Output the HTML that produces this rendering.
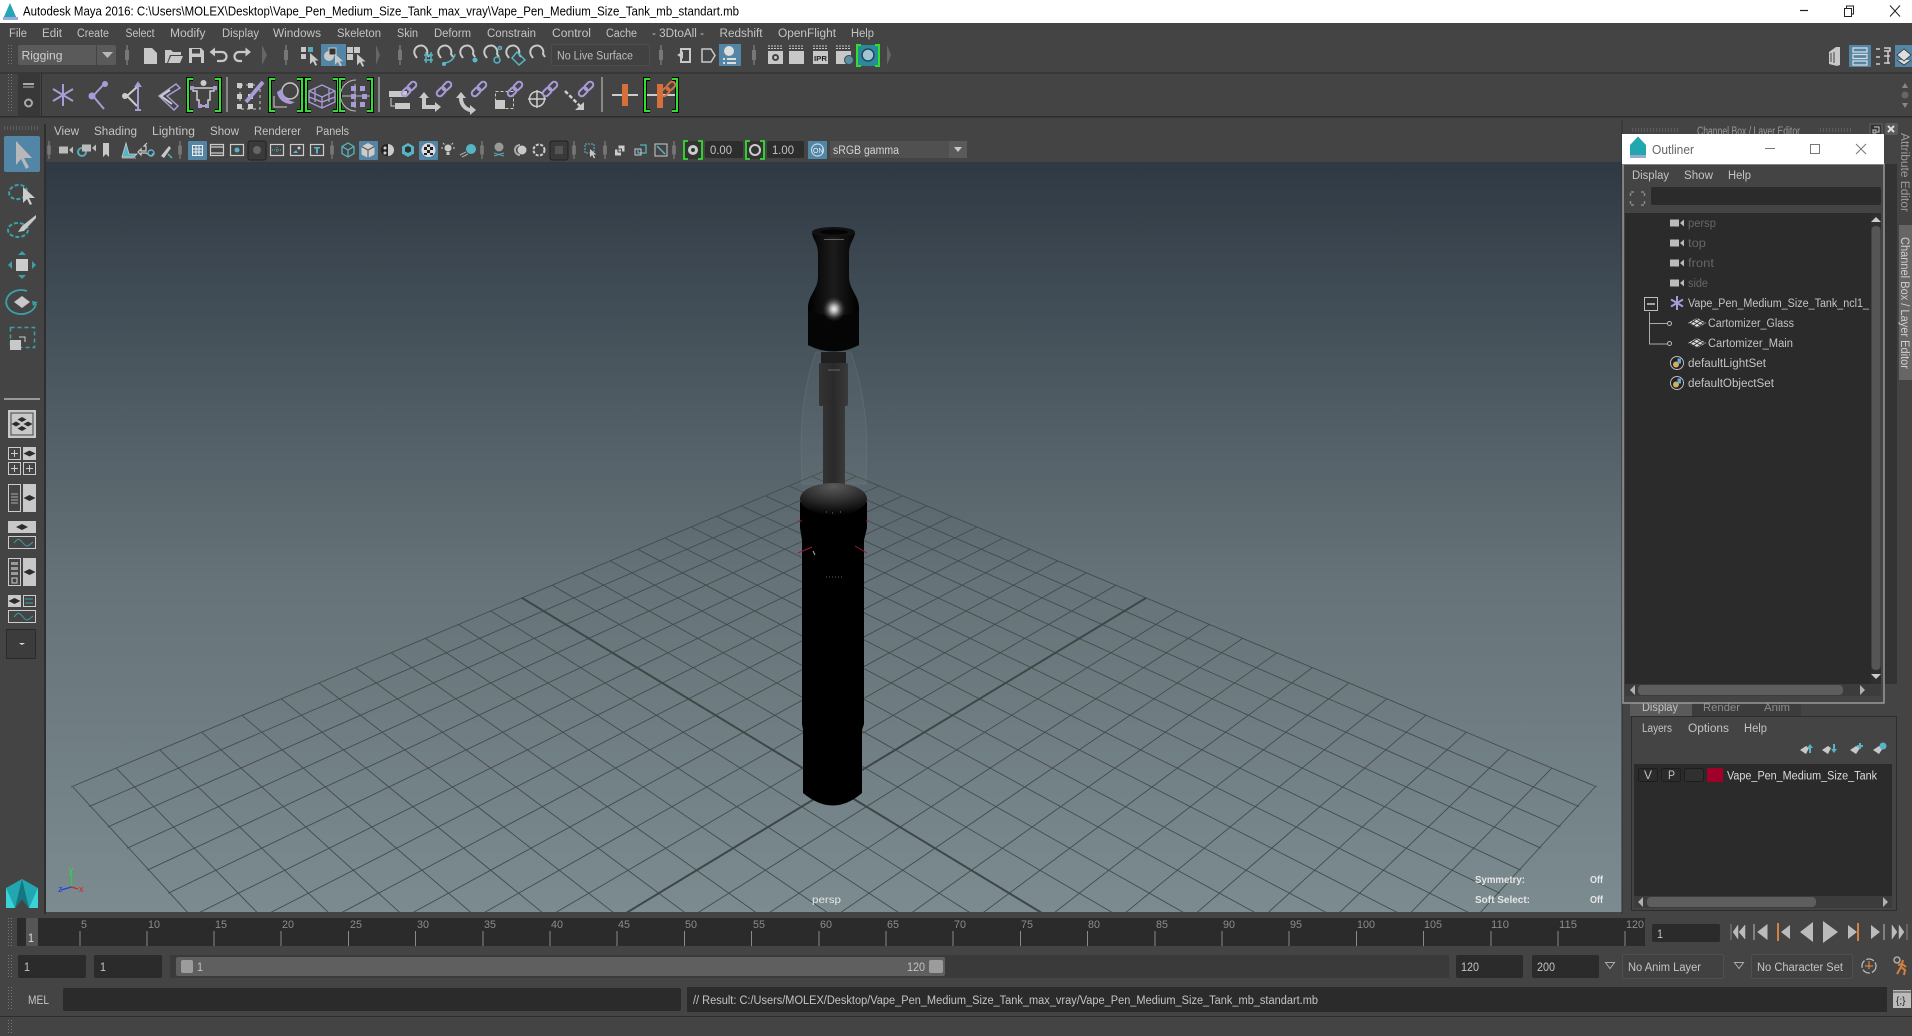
<!DOCTYPE html>
<html lang="en"><head><meta charset="utf-8"><title>Autodesk Maya 2016</title>
<style>
html,body{margin:0;padding:0;width:1912px;height:1036px;overflow:hidden;background:#444}
#wrap{position:relative;width:1912px;height:1036px;overflow:hidden}
svg{display:block}
text{font-family:"Liberation Sans",sans-serif;font-size:11.5px;fill:#c4c4c4}
.d{fill:#666}.k{fill:#000;font-size:12.5px}.w{fill:#e6e6e6;font-size:10.5px}.r{fill:#8c8c8c;font-size:11px}
.i{fill:#c8c8c8}.s{fill:none;stroke:#c8c8c8;stroke-width:2}
.t{fill:none;stroke:#55b5c4;stroke-width:1.5}
.p{fill:#a99bd8}.ps{fill:none;stroke:#a99bd8;stroke-width:2}
.dot{stroke:#777;stroke-width:1;stroke-dasharray:1 2;fill:none}
</style></head><body>
<div id="wrap">
<svg width="1912" height="1036" viewBox="0 0 1912 1036">
<defs>
<linearGradient id="vg" x1="0" y1="0" x2="0" y2="1"><stop offset="0" stop-color="#2f3943"/><stop offset=".3" stop-color="#4c5961"/><stop offset=".56" stop-color="#667378"/><stop offset="1" stop-color="#7b8b8f"/></linearGradient>
<linearGradient id="mp" x1="0" y1="0" x2="1" y2="0"><stop offset="0" stop-color="#000"/><stop offset=".5" stop-color="#1c1c1c"/><stop offset="1" stop-color="#000"/></linearGradient>
<linearGradient id="st" x1="0" y1="0" x2="1" y2="0"><stop offset="0" stop-color="#333"/><stop offset=".5" stop-color="#2a2a2a"/><stop offset="1" stop-color="#3a3a3a"/></linearGradient>
<radialGradient id="hl"><stop offset="0" stop-color="#f4f4f4"/><stop offset=".3" stop-color="#aaa"/><stop offset="1" stop-color="#222" stop-opacity="0"/></radialGradient>
<radialGradient id="dm" cx=".5" cy=".1" r=".85"><stop offset="0" stop-color="#5a5a5a"/><stop offset=".55" stop-color="#2e2e2e"/><stop offset="1" stop-color="#060606"/></radialGradient>
<clipPath id="vp"><rect x="46" y="162" width="1576" height="750"/></clipPath>
<path id="gA" d="M834 467L71 787M856.3 476.3L89 806.6M879.2 485.9L107.6 827M902.6 495.8L127 848.2M926.8 505.9L147.2 870.2M951.5 516.3L168.2 893.2M977 527L196.400 914M1003.2 538L267.700 914M1030.1 549.3L339 914M1057.9 560.9L410.300 914M1086.4 572.8L481.700 914M1115.8 585.2L553.200 914M1177.3 611L695.800 914M1209.5 624.5L767.200 914M1242.7 638.4L838.500 914M1276.9 652.8L909.900 914M1312.4 667.6L981.300 914M1349 683L1052.700 914M1386.8 698.8L1123.900 914M1425.9 715.3L1195.300 914M1466.4 732.2L1266.600 914M1508.4 749.8L1338 914M1551.9 768.1L1409.400 914M1595 787L1479 914" fill="none" stroke="#424c4e" stroke-width=".9"/>
<path id="gT" d="M1146.1 597.9L624.500 914" fill="none" stroke="#3e4648" stroke-width="2"/>
<path id="cur" d="M0 0V15L4 11 7 17 9.500 16 6.500 10H11.500Z" fill="#c8c8c8"/>
<path id="mag" d="M-5 6L-7 3A6.500 6.500 0 1 1 5 2L7 5" fill="none" stroke="#c8c8c8" stroke-width="2"/>
<g id="knob"><rect x="-1" y="-10" width="2" height="20" fill="#6a6a6a"/><rect x="-2" y="-5" width="4" height="10" fill="#777"/></g>
<g id="bl"><path d="M6 -16H1V16H6M28 -16H33V16H28" fill="none" stroke="#000" stroke-width="4"/><path d="M6 -16H1V16H6M28 -16H33V16H28" fill="none" stroke="#2fe02f" stroke-width="2"/></g>
<g id="chain"><rect x="-9" y="-3" width="10" height="6" rx="3" fill="none" stroke="#a99bd8" stroke-width="2"/><rect x="-1" y="-3" width="10" height="6" rx="3" fill="none" stroke="#a99bd8" stroke-width="2"/></g>
<g id="set"><circle r="6.500" fill="#222" stroke="#bbb" stroke-width="1"/><circle cx="-1" cy="1.500" r="3" fill="#d0b060"/><rect x="0.500" y="-4.500" width="3.500" height="5" fill="#6aa6d0"/></g>
<g id="cam"><rect x="-7" y="-3.500" width="9" height="7" fill="#bbb"/><path d="M3 0L7 -3.500V3.500Z" fill="#bbb"/></g>
<g id="mesh"><path d="M-9 0L0 -5 9 0 0 5Z" fill="#ddd"/><path d="M-5 -2L5 3M-1 -4L8 1M-8 0L1 5M5 -3L-4 3M1 -5L-7 1M8 -1L-1 5" fill="none" stroke="#333" stroke-width=".9"/></g>
<path id="dia" d="M-6 0L0 -3 6 0 0 3Z" fill="#2c2c2c"/>
<path id="dia2" d="M-4.500 0L0 -2.500 4.500 0 0 2.500Z" fill="#2c2c2c"/>
</defs>

<!-- window bg -->
<rect width="1912" height="1036" fill="#444"/>
<rect width="1912" height="23" fill="#fff"/>
<path d="M3 19L10 3 17 19Z" fill="#25a5b5"/><rect x="3" y="17" width="15" height="3" fill="#9ad"/>
<text class="k" x="23" y="15.500" textLength="716" lengthAdjust="spacingAndGlyphs">Autodesk Maya 2016: C:\Users\MOLEX\Desktop\Vape_Pen_Medium_Size_Tank_max_vray\Vape_Pen_Medium_Size_Tank_mb_standart.mb</text>
<path d="M1800 10.500h8" stroke="#222" stroke-width="1.200"/>
<path d="M1844.500 8.500h7v8h-7zM1846.500 8.500v-2.500h7v8h-2" fill="none" stroke="#222"/>
<path d="M1890 5.500l10 11M1900 5.500l-10 11" stroke="#222" fill="none"/>

<!-- menu bar -->
<g>
<text x="9" y="37" textLength="18" lengthAdjust="spacingAndGlyphs">File</text>
<text x="42" y="37" textLength="20" lengthAdjust="spacingAndGlyphs">Edit</text>
<text x="77" y="37" textLength="32" lengthAdjust="spacingAndGlyphs">Create</text>
<text x="125.500" y="37" textLength="29" lengthAdjust="spacingAndGlyphs">Select</text>
<text x="170" y="37" textLength="35.500" lengthAdjust="spacingAndGlyphs">Modify</text>
<text x="222" y="37" textLength="37" lengthAdjust="spacingAndGlyphs">Display</text>
<text x="273" y="37" textLength="48" lengthAdjust="spacingAndGlyphs">Windows</text>
<text x="337" y="37" textLength="44" lengthAdjust="spacingAndGlyphs">Skeleton</text>
<text x="397" y="37" textLength="21" lengthAdjust="spacingAndGlyphs">Skin</text>
<text x="434" y="37" textLength="37" lengthAdjust="spacingAndGlyphs">Deform</text>
<text x="487" y="37" textLength="49" lengthAdjust="spacingAndGlyphs">Constrain</text>
<text x="552" y="37" textLength="39" lengthAdjust="spacingAndGlyphs">Control</text>
<text x="606" y="37" textLength="31" lengthAdjust="spacingAndGlyphs">Cache</text>
<text x="652" y="37" textLength="52" lengthAdjust="spacingAndGlyphs">- 3DtoAll -</text>
<text x="719.500" y="37" textLength="43" lengthAdjust="spacingAndGlyphs">Redshift</text>
<text x="778" y="37" textLength="58" lengthAdjust="spacingAndGlyphs">OpenFlight</text>
<text x="851" y="37" textLength="23" lengthAdjust="spacingAndGlyphs">Help</text>
</g>

<!-- status toolbar -->
<path class="dot" d="M8.500 45V66M11.500 45V66"/>
<rect x="18" y="45" width="98" height="20" rx="2" fill="#5a5a5a"/><rect x="96" y="45" width="1" height="20" fill="#444"/>
<text x="21.500" y="59.500" style="font-size:12px;fill:#d0d0d0" textLength="41" lengthAdjust="spacingAndGlyphs">Rigging</text>
<path d="M102 52h11l-5.500 6z" fill="#b8b8b8"/>
<use href="#knob" x="127" y="55"/>
<path d="M144 48h8l5 5v11h-13z" class="i"/>
<path d="M165 50h6l2 2h8v3h-11l-3 8h-2zM171 56h12l-3 7h-12z" class="i"/>
<path d="M189 48h12l3 3v12h-15z" class="i"/><rect x="192" y="49" width="8" height="4.500" fill="#444"/><rect x="192" y="57" width="9" height="6" fill="#444"/>
<path d="M214 52h8a4.500 4.500 0 0 1 0 9h-5" fill="none" stroke="#c8c8c8" stroke-width="2.200"/><path d="M215 47.500v9l-5.500 -4.500z" class="i"/>
<path d="M246 52h-7a4.500 4.500 0 0 0 0 9h3" fill="none" stroke="#c8c8c8" stroke-width="2.200"/><path d="M245.500 47.500v9l5.500 -4.500z" class="i"/>
<path d="M262 45l5 10 -5 10z" fill="#666"/>
<use href="#knob" x="286" y="55"/>
<rect x="301" y="47" width="5" height="5" class="i"/><rect x="301" y="54" width="5" height="5" class="i"/><rect x="308" y="47" width="5" height="5" fill="#5ab"/>
<use href="#cur" transform="translate(310 53) scale(.75)"/>
<rect x="321" y="44" width="25" height="22" fill="#5285a6"/><circle cx="329" cy="56" r="5" class="i"/><rect x="329" y="48" width="7" height="7" fill="#333" stroke="#ccc"/><use href="#cur" transform="translate(335 54) scale(.72)"/>
<rect x="347" y="47" width="6" height="6" class="i"/><rect x="354" y="47" width="6" height="6" class="i"/><rect x="347" y="54" width="6" height="6" class="i"/><use href="#cur" transform="translate(357 54) scale(.75)"/>
<path d="M376 45l4 10 -4 10z" fill="#666"/>
<use href="#knob" x="400" y="55"/>
<use href="#mag" x="422" y="52"/><path d="M424 55h9M424 60h9M426 52v11M431 52v11" class="t"/>
<use href="#mag" x="446" y="52"/><path d="M443 63c4 0 11 -2 12 -9" class="t" stroke-width="2"/><circle cx="444" cy="64" r="2" fill="#5bc"/>
<use href="#mag" x="468" y="52"/><circle cx="475" cy="60" r="2.500" fill="#5bc"/>
<use href="#mag" x="492" y="52"/><circle cx="497" cy="60" r="3" class="t"/><circle cx="500" cy="48" r="1.500" class="t"/>
<use href="#mag" x="514" y="52"/><path d="M517 52l8 8 -6 5 -7 -7z" class="t"/>
<use href="#mag" x="538" y="52"/>
<rect x="551.500" y="44.500" width="98" height="21" rx="2" fill="#414141" stroke="#4e4e4e"/>
<text x="557" y="59.500" textLength="76" lengthAdjust="spacingAndGlyphs" style="fill:#bcbcbc">No Live Surface</text>
<use href="#knob" x="661" y="55"/>
<path d="M681 49h9v13h-9zM679 55l3 -2v4z" class="s" stroke-width="1.500"/>
<path d="M702 49h9l4 6.500 -4 6.500h-9z" fill="none" stroke="#c8c8c8" stroke-width="1.500"/>
<rect x="719" y="44" width="22" height="22" fill="#5285a6"/><circle cx="729" cy="51" r="5" fill="#ddd"/><path d="M723 58h2v2h-2zM727 58h9v2h-9zM723 62h2v2h-2zM727 62h9v2h-9z" fill="#ddd"/>
<use href="#knob" x="754" y="55"/>
<path d="M768 46h15M789 46h15M813 46h15M836 46h15M768 48.500h15M789 48.500h15M813 48.500h15M836 48.500h15" stroke="#c8c8c8" stroke-dasharray="2 1"/>
<rect x="768" y="51" width="15" height="13" class="i"/><circle cx="775.500" cy="57.500" r="3.500" fill="#444"/><circle cx="775.500" cy="57.500" r="1.500" fill="#ccc"/>
<rect x="789" y="51" width="15" height="13" class="i"/>
<rect x="813" y="51" width="15" height="13" class="i"/><text x="814" y="61" style="font-size:7.500px;fill:#222;font-weight:bold" textLength="13" lengthAdjust="spacingAndGlyphs">IPR</text>
<rect x="836" y="51" width="15" height="13" class="i"/><circle cx="849" cy="60" r="4.500" fill="#5a8fa8" stroke="#444"/>
<rect x="858" y="45" width="20" height="21" fill="#2a8a9a"/><circle cx="868" cy="55" r="6" fill="#9fc6ce" stroke="#246" stroke-width="1.500"/>
<path d="M861 45h-4v21h4M875 45h4v21h-4" fill="none" stroke="#2fe02f" stroke-width="2"/>
<path d="M887 45l4 10 -4 10z" fill="#666"/>

<!-- right workspace icons -->
<path d="M1829 52l7 -5 4 0 v18l-3 1 -8 -2z" class="i"/><path d="M1831 53v9M1834 52v11" stroke="#444" stroke-width="1"/>
<rect x="1849" y="45" width="22" height="22" fill="#5285a6"/><path d="M1853 48h14v4h-14zM1853 54.500h14v4h-14zM1853 61h14v4h-14z" fill="none" stroke="#ddd" stroke-width="1.200"/>
<path d="M1876 49h4M1884 48h6v3h-6M1876 57h4M1884 56h6M1876 64h4M1884 63h6M1888 51v13" fill="none" stroke="#ccc" stroke-width="1.500"/>
<rect x="1895" y="45" width="17" height="22" fill="#5285a6"/><path d="M1897 55l7 -6 7 6 -7 6zM1897 60l7 5 7 -5" fill="#ddd" stroke="#333" stroke-width=".8"/>

<!-- shelf -->
<path d="M0 73H1912M0 116.500H1912" stroke="#2d2d2d"/>
<path class="dot" d="M8.500 74V113M11.500 74V113"/>
<rect x="18" y="72" width="22" height="45" fill="#383838"/>
<rect x="23" y="83" width="11" height="2" fill="#aaa"/><rect x="23" y="86" width="11" height="2" fill="#777"/>
<circle cx="28.500" cy="103" r="3.500" fill="none" stroke="#aaa" stroke-width="2"/>
<rect x="41" y="73" width="1" height="43" fill="#2d2d2d"/>
<path d="M63 84V106M53 89L73 101M53 101L73 89" class="ps" stroke-width="2.500"/>
<path d="M105 83L93 96 104 109" class="ps" stroke-width="2"/><circle cx="105" cy="84" r="3" class="p"/><circle cx="92" cy="96" r="3.500" class="p"/>
<path d="M127 96L137 87M127 96L137 106" fill="none" stroke="#ccc" stroke-width="2"/><path d="M138 83V110" class="ps" stroke-width="2.500"/><path d="M135 110h6M138 83l-2 3h4z" class="ps" stroke-width="1"/><circle cx="125" cy="96" r="3" fill="#ccc"/>
<path d="M176 84L159 96 174 110 178 106 167 96 180 88Z" fill="none" stroke="#a99bd8" stroke-width="1.500"/><path d="M170 90L161 96 172 104" fill="none" stroke="#ccc" stroke-width="2"/>
<use href="#bl" x="187" y="95"/>
<circle cx="203.500" cy="83" r="3" fill="#ccc"/><path d="M193 88h21v3h-4v9h-2v6h-9v-6h-2v-9h-4z" fill="none" stroke="#ccc" stroke-width="1.500"/><rect x="190" y="86" width="4" height="4" class="p"/><rect x="213" y="86" width="4" height="4" class="p"/><rect x="198" y="104" width="4" height="4" class="p"/><rect x="205" y="104" width="4" height="4" class="p"/>
<rect x="226" y="77" width="2" height="35" fill="#888"/>
<path d="M240 85h20v24h-20z" fill="none" stroke="#ccc" stroke-dasharray="3 3"/><path d="M237 83h5v5h-5zM248 83h5v5h-5zM237 94h5v5h-5zM248 94h5v5h-5zM237 104h5v5h-5zM248 104h5v5h-5z" fill="#ccc"/><path d="M246 102L263 82" stroke="#a99bd8" stroke-width="4"/>
<use href="#bl" x="269" y="95"/>
<circle cx="290" cy="91" r="8" fill="#444" stroke="#c8c8c8" stroke-width="1.500"/><path d="M277 92a14 14 0 0 0 14 12l4 -2a14 14 0 0 1 -13 -13z" class="p"/><path d="M274 96v11h13" fill="none" stroke="#ccc"/>
<use href="#bl" x="305" y="95"/>
<path d="M309 91l13 -6 13 6v11l-13 6 -13 -6zM309 91l13 6 13 -6M322 97v11M315 88v14M329 88v14M309 97l13 5 13 -5" fill="none" stroke="#a99bd8" stroke-width="1.300"/>
<use href="#bl" x="339" y="95"/>
<path d="M356 80a15 15 0 0 0 0 31M342 96h28M355 84v24" fill="none" stroke="#bbb"/>
<path d="M351 86h5v5h-5zM360 86h5v5h-5zM351 94h5v5h-5zM362 94h5v5h-5zM351 102h5v5h-5zM360 102h5v5h-5z" class="p"/>
<rect x="378" y="77" width="2" height="35" fill="#888"/>
<rect x="389" y="91" width="18" height="6" class="i"/><rect x="395" y="103" width="15" height="6" class="i"/><path d="M391 98v8h4" fill="none" stroke="#ccc"/><use href="#chain" transform="translate(409 89) rotate(-45)"/>
<path d="M424 92l-5 6h3v11h13v3l6 -5 -6 -5v3h-9v-7h3z" class="i"/><use href="#chain" transform="translate(444 89) rotate(-45)"/>
<path d="M461 92l-5 6h3a14 14 0 0 0 11 14v3l6 -5 -6 -5v3a10 10 0 0 1 -7 -10h3z" class="i"/><use href="#chain" transform="translate(479 89) rotate(-45)"/>
<rect x="495.500" y="91.500" width="18" height="17" fill="none" stroke="#ccc" stroke-dasharray="3 2"/><rect x="495" y="100" width="10" height="9" class="i"/><use href="#chain" transform="translate(515 89) rotate(-45)"/>
<circle cx="537" cy="99" r="7.500" fill="none" stroke="#ccc" stroke-width="1.500"/><path d="M528 99h18M537 90v18" stroke="#ccc" stroke-width="1.500"/><use href="#chain" transform="translate(550 89) rotate(-45)"/>
<path d="M565 91l15 15" stroke="#ccc" stroke-width="2.500" stroke-dasharray="4 2"/><path d="M584 102v8h-9z" class="i"/><use href="#chain" transform="translate(586 89) rotate(-45)"/>
<rect x="601" y="77" width="2" height="35" fill="#888"/>
<path d="M612 95h26" stroke="#ccc" stroke-width="2"/><rect x="622" y="84" width="6" height="22" fill="#d5703d"/>
<use href="#bl" x="644" y="95"/>
<path d="M647 95h28" stroke="#ccc" stroke-width="2"/><rect x="657" y="84" width="6" height="24" fill="#d5703d"/>
<g transform="translate(668 89) rotate(-45)"><rect x="-9" y="-3" width="10" height="6" rx="3" fill="none" stroke="#d5703d" stroke-width="2"/><rect x="-1" y="-3" width="10" height="6" rx="3" fill="none" stroke="#d5703d" stroke-width="2"/></g>
<path d="M1902 88l3 -5 3 5z" fill="#888"/><circle cx="1905" cy="95" r="3.500" fill="#666"/><path d="M1902 103l3 5 3 -5z" fill="#888"/>
<path d="M0 117h1912" stroke="#2d2d2d"/>

<!-- viewport -->
<rect x="46" y="162" width="1576" height="750" fill="url(#vg)"/>
<g clip-path="url(#vp)">
<use href="#gA"/><use href="#gA" transform="translate(1668 0) scale(-1 1)"/>
<use href="#gT"/><use href="#gT" transform="translate(1668 0) scale(-1 1)"/>
<!-- glass -->
<path d="M816 352C806 380 801 410 801 450L802 484H866L867 450C867 410 860 380 851 352Z" fill="#fff" fill-opacity=".035" stroke="#a0aeb4" stroke-opacity=".14"/>
<!-- stem -->
<rect x="821" y="352" width="25" height="12" fill="#1d1d1d" opacity=".95"/>
<rect x="819" y="363" width="29" height="43" rx="2" fill="url(#st)"/>
<path d="M828 370h12" stroke="#777" stroke-width=".8"/>
<rect x="823" y="406" width="22" height="82" fill="url(#st)"/>
<!-- mouthpiece -->
<path d="M812 233C813 240 818 243 818 254L818 276C818 290 808 295 808 308L808 345Q834 358 859 345L859 308C859 295 849 290 849 276L849 254C849 243 854 240 855 233Z" fill="url(#mp)"/>
<path d="M808 310Q834 322 859 310V345Q834 358 808 345Z" fill="#050505"/>
<ellipse cx="833.500" cy="232" rx="21.500" ry="5" fill="#111"/>
<ellipse cx="834" cy="232" rx="14" ry="2.500" fill="#040404"/><path d="M824 239.500h20" stroke="#bbb" stroke-opacity=".6" stroke-width=".8"/>
<ellipse cx="834" cy="309" rx="12" ry="13" fill="url(#hl)"/>
<!-- body -->
<path d="M800 502V528L802 540V724L803 730V793Q833 818 862 793V730L864 724V540L867 528V502Z" fill="#000"/>
<ellipse cx="833.500" cy="499" rx="33.500" ry="16" fill="url(#dm)"/>
<path d="M798 521h4M866 521h3M798 553L812 547M855 546L867 553" stroke="#a01840" stroke-width="1"/>
<path d="M826 577h16" stroke="#666" stroke-width="1" stroke-dasharray="1 2"/>
<path d="M826 512h1M832 513h1M840 512h1" stroke="#777" stroke-width="1"/>
<path d="M813 551l2 4" stroke="#aaa" stroke-width="1"/>
</g>
<!-- axis -->
<path d="M71.500 887V873" stroke="#2ecc40" stroke-width="1.400"/><path d="M71.500 887L61 890" stroke="#2040e0" stroke-width="1.400"/><path d="M71.500 887L78 889" stroke="#e02020" stroke-width="1.400"/>
<text x="68.500" y="873" style="font-size:9px;fill:#33dd44">y</text><text x="58" y="892" style="font-size:9px;fill:#2040e0">z</text><text x="79" y="892" style="font-size:9px;fill:#e02020">x</text>
<text class="w" x="812" y="903" textLength="29" lengthAdjust="spacingAndGlyphs">persp</text>
<text class="w" x="1475" y="883" textLength="50" lengthAdjust="spacingAndGlyphs" font-weight="bold">Symmetry:</text>
<text class="w" x="1590" y="883" textLength="13" lengthAdjust="spacingAndGlyphs" font-weight="bold">Off</text>
<text class="w" x="1475" y="903" textLength="55" lengthAdjust="spacingAndGlyphs" font-weight="bold">Soft Select:</text>
<text class="w" x="1590" y="903" textLength="13" lengthAdjust="spacingAndGlyphs" font-weight="bold">Off</text>

<!-- panel menu & bar -->
<path class="dot" d="M4 127H38M4 129H38"/>
<text x="54" y="135" textLength="25" lengthAdjust="spacingAndGlyphs">View</text>
<text x="94" y="135" textLength="43" lengthAdjust="spacingAndGlyphs">Shading</text>
<text x="152" y="135" textLength="43" lengthAdjust="spacingAndGlyphs">Lighting</text>
<text x="210" y="135" textLength="29" lengthAdjust="spacingAndGlyphs">Show</text>
<text x="254" y="135" textLength="47" lengthAdjust="spacingAndGlyphs">Renderer</text>
<text x="316" y="135" textLength="33" lengthAdjust="spacingAndGlyphs">Panels</text>
<use href="#knob" transform="translate(49 150) scale(.9)"/>
<use href="#cam" x="66" y="150"/><circle cx="82" cy="152" r="4" fill="none" stroke="#5ab" stroke-width="2"/><use href="#cam" x="89" y="148"/>
<path d="M103 143h6v14l-3 -3 -3 3z" class="i"/>
<path d="M126 143l-4 14h12l3 -3h-8zM122 158h14" fill="#55b5c4" stroke="#ccc" stroke-width=".8"/>
<path d="M147 143l-3 3h2v5h-5v-2l-3 3 3 3v-2h5l5 3 3 -3" fill="none" stroke="#ccc" stroke-width="1.200"/><circle cx="151" cy="153" r="3" class="t"/>
<path d="M161 156l8 -10 2 2 -7 10z" class="i"/><path d="M168 154l4 4" class="t"/>
<use href="#knob" transform="translate(180 150) scale(.9)"/>
<rect x="188" y="141" width="19" height="19" rx="1" fill="#5285a6"/><path d="M192.500 145.500h10v10h-10zM192.500 149h10M192.500 152h10M196 145.500v10M199 145.500v10" fill="none" stroke="#eee"/>
<path d="M210.500 144.500h13v11h-13zM210.500 147h13M210.500 153h13" fill="none" stroke="#ccc" stroke-width="1.200"/>
<rect x="230.500" y="144.500" width="13" height="11" fill="none" stroke="#ccc" stroke-width="1.200"/><circle cx="237" cy="150" r="2.500" fill="#55b5c4"/>
<rect x="248" y="141" width="18" height="19" rx="2" fill="#3a3a3a" stroke="#222"/><circle cx="257" cy="150" r="4" fill="#666"/>
<rect x="270.500" y="144.500" width="13" height="11" fill="none" stroke="#ccc" stroke-width="1.200"/><path d="M272 150h10M277 147v6" stroke="#55b5c4" stroke-dasharray="1 1"/>
<rect x="290.500" y="144.500" width="13" height="11" fill="none" stroke="#ccc" stroke-width="1.200"/><path d="M293 153l3 -3 2 3z" fill="#55b5c4"/><circle cx="299" cy="148" r="1.500" fill="#ccc"/>
<rect x="310.500" y="144.500" width="13" height="11" fill="none" stroke="#ccc" stroke-width="1.200"/><path d="M314 147h6v1.500h-2v5h-2v-5h-2z" fill="#55b5c4"/>
<use href="#knob" transform="translate(332 150) scale(.9)"/>
<path d="M348 143l6 3.500v7l-6 3.500 -6 -3.500v-7zM342 146.500l6 3.500 6 -3.500M348 150v7" fill="none" stroke="#55b5c4" stroke-width="1.300"/>
<rect x="359" y="141" width="19" height="19" rx="1" fill="#5285a6"/><path d="M368 143l6.500 3.500v8l-6.500 3.500 -6.500 -3.500v-8z" fill="#ccc"/><path d="M361.500 146.500l6.500 3.500 6.500 -3.500M368 150v8" fill="none" stroke="#555"/>
<circle cx="388" cy="150" r="6" fill="#ccc"/><path d="M388 144v12h-1a6 6 0 0 1 0 -12z" fill="#222"/><circle cx="385" cy="148" r="1.500" fill="#ccc"/><circle cx="385" cy="153" r="1.500" fill="#ccc"/>
<path d="M408 143l6 3.500v7l-6 3.500 -6 -3.500v-7z" fill="#55b5c4"/><path d="M408 146l3 1.500v4l-3 1.500 -3 -1.500v-4z" fill="#333"/>
<rect x="419" y="141" width="19" height="19" rx="1" fill="#5285a6"/><circle cx="428.500" cy="150" r="7" fill="#ddd"/><path d="M424 147h3v3h-3zM430 147h3v3h-3zM427 150h3v3h-3zM424 153h3v2h-3zM430 153h3v2h-3zM427 144.500h3v2.500h-3z" fill="#222"/>
<circle cx="448" cy="148" r="3.500" class="i"/><rect x="446.500" y="152" width="3" height="3" class="i"/><path d="M441 148h2M453 148h2M443 143l1.500 1.500M453 143l-1.500 1.500" stroke="#ccc"/>
<circle cx="471" cy="149" r="5" fill="#55b5c4"/><path d="M460 155l6 -3M462 157l6 -3" stroke="#aaa"/>
<use href="#knob" transform="translate(482 150) scale(.9)"/>
<circle cx="499" cy="147" r="4.500" fill="#999"/><path d="M494 153l10 3M504 153l-10 3" stroke="#5ab"/>
<path d="M520 145a5 5 0 0 0 0 10" fill="none" stroke="#aaa" stroke-width="2"/><circle cx="522" cy="150" r="4.500" class="i"/>
<circle cx="539" cy="150" r="5.500" fill="none" stroke="#ccc" stroke-width="2" stroke-dasharray="3 1.500"/>
<rect x="550" y="141" width="18" height="19" rx="2" fill="#3a3a3a" stroke="#222"/><rect x="555" y="146" width="8" height="8" fill="#555"/>
<use href="#knob" transform="translate(574 150) scale(.9)"/>
<rect x="585" y="144" width="9" height="9" fill="none" stroke="#55b5c4" stroke-dasharray="2 1"/><use href="#cur" transform="translate(590 149) scale(.55)"/>
<use href="#knob" transform="translate(605 150) scale(.9)"/>
<path d="M618 145h7v7h-7zM614.500 149h7v7h-7z" fill="#ccc" stroke="#444" stroke-width="1"/>
<path d="M640 145h6v8h-8v-3" fill="none" stroke="#55b5c4" stroke-width="1.300"/><rect x="635" y="149" width="6" height="6" fill="none" stroke="#ccc"/>
<rect x="655" y="144" width="12" height="12" fill="none" stroke="#ccc"/><path d="M657 146l8 8" stroke="#55b5c4" stroke-width="1.500"/>
<use href="#knob" transform="translate(674 150) scale(.9)"/>
<rect x="685" y="141" width="16" height="18" fill="#333"/><circle cx="693" cy="150" r="5" fill="#ccc"/><circle cx="693" cy="150" r="2" fill="#333"/>
<path d="M688 141h-4v18h4M698 141h4v18h-4" fill="none" stroke="#2fe02f" stroke-width="1.800"/>
<rect x="705" y="141" width="38" height="17" rx="2" fill="#2d2d2d"/><text x="710" y="154" textLength="22" lengthAdjust="spacingAndGlyphs">0.00</text>
<rect x="747" y="141" width="16" height="18" fill="#333"/><circle cx="755" cy="150" r="5" fill="none" stroke="#ccc" stroke-width="2"/>
<path d="M750 141h-4v18h4M760 141h4v18h-4" fill="none" stroke="#2fe02f" stroke-width="1.800"/>
<rect x="767" y="141" width="37" height="17" rx="2" fill="#2d2d2d"/><text x="772" y="154" textLength="22" lengthAdjust="spacingAndGlyphs">1.00</text>
<rect x="808" y="141" width="19" height="18" fill="#5285a6"/><circle cx="817.500" cy="150" r="6" fill="none" stroke="#bde" stroke-width="1.200"/><text x="813" y="153" style="font-size:7px;fill:#eee">ON</text>
<rect x="830" y="141" width="137" height="17" fill="#5a5a5a"/><rect x="830" y="141" width="119" height="17" fill="#505050"/>
<text x="833" y="154" textLength="66" lengthAdjust="spacingAndGlyphs" style="fill:#d4d4d4">sRGB gamma</text>
<path d="M954 147h8l-4 5z" fill="#c8c8c8"/>

<!-- left toolbox -->
<rect x="44" y="124" width="2" height="790" fill="#2f2f2f"/>
<rect x="4" y="136" width="36" height="36" rx="2" fill="#5285a6"/>
<path d="M16 141V165L21 159 26 169 29 167 24 158H32Z" fill="#b8b8b8"/>
<ellipse cx="18" cy="192" rx="9" ry="7" fill="none" stroke="#3ba0a8" stroke-width="2" stroke-dasharray="4 2" transform="rotate(-15 18 192)"/><path d="M23 187V203L27 199 30 205 32 204 29 198H35Z" fill="#ccc"/>
<ellipse cx="18" cy="230" rx="10" ry="7" fill="none" stroke="#3ba0a8" stroke-width="2" stroke-dasharray="4 2"/><path d="M36 215L22 226 18 232 24 231 36 218Z" class="i"/>
<rect x="16" y="259" width="12" height="12" fill="#ccc"/><path d="M22 251l4 4h-8zM22 279l4 -4h-8zM8 265l4 -4v8zM36 265l-4 -4v8z" fill="#3ba0a8"/>
<path d="M27 291a15 12 0 1 0 9 13" fill="none" stroke="#3ba0a8" stroke-width="1.800"/><path d="M14 302l8 -6 8 6 -8 6z" class="i"/><path d="M38 302l-5 4 -1 -5z" fill="#3ba0a8"/>
<rect x="10.500" y="327.500" width="24" height="20" fill="none" stroke="#3ba0a8" stroke-width="1.500" stroke-dasharray="4 3"/><rect x="10" y="340" width="11" height="10" class="i"/><path d="M19 337h6v5" stroke="#ccc" fill="none"/>
<rect x="4" y="398" width="36" height="2" fill="#999"/>
<rect x="8" y="410" width="28" height="28" fill="#c8c8c8"/><rect x="11" y="413" width="22" height="22" fill="none" stroke="#444"/><use href="#dia2" x="22" y="419.500"/><use href="#dia2" x="16" y="424"/><use href="#dia2" x="28" y="424"/><use href="#dia2" x="22" y="428.500"/>
<rect x="8.500" y="447.500" width="12" height="12" fill="none" stroke="#ccc"/><rect x="23" y="447" width="13" height="13" class="i"/><rect x="8.500" y="462.500" width="12" height="12" fill="none" stroke="#ccc"/><rect x="23.500" y="462.500" width="12" height="12" fill="none" stroke="#ccc"/>
<path d="M14.500 450v7M11 453.500h7M14.500 465v7M11 468.500h7M29.500 465v7M26 468.500h7" stroke="#ccc"/><use href="#dia" x="29.500" y="453.500"/>
<rect x="8.500" y="484.500" width="12" height="27" fill="none" stroke="#ccc"/><rect x="23" y="484" width="13" height="28" class="i"/><path d="M11 494h7M11 497h7M11 500h7M11 503h7" stroke="#aaa"/><use href="#dia" x="29.500" y="498"/>
<rect x="8" y="521" width="28" height="12" class="i"/><use href="#dia" x="22" y="527"/><rect x="8.500" y="536.500" width="27" height="12" fill="none" stroke="#ccc"/><path d="M14 543c4 -5 5 -5 9 0s5 3 10 -1" fill="none" stroke="#3ba0a8"/>
<rect x="8.500" y="558.500" width="12" height="27" fill="none" stroke="#ccc"/><rect x="23" y="558" width="13" height="28" class="i"/><path d="M11 562h7v3h-7zM11 567h7v3h-7zM11 572h7v3h-7z" fill="#999"/><rect x="12" y="578" width="5" height="5" fill="none" stroke="#ccc"/><use href="#dia" x="29.500" y="572"/>
<rect x="8" y="595" width="13" height="12" class="i"/><use href="#dia" x="14.500" y="601"/><rect x="23.500" y="595.500" width="12" height="11" fill="none" stroke="#ccc"/><path d="M25 599h8M25 603h8" stroke="#3ba0a8"/>
<rect x="8.500" y="610.500" width="27" height="12" fill="none" stroke="#ccc"/><path d="M14 617c4 -5 5 -5 9 0s5 3 10 -1" fill="none" stroke="#3ba0a8"/>
<rect x="6.500" y="629.500" width="29" height="29" fill="#3c3c3c" stroke="#2a2a2a"/><path d="M19 643h6l-3 2z" fill="#ddd"/>
<!-- Maya logo -->
<path d="M6 888L22 879 38 888V908H29L22 899 15 908H6Z" fill="#22a7b0"/><path d="M22 879L15 908 22 899 29 908Z" fill="#147680"/><path d="M6 888L15 908H6Z" fill="#3bd3d8"/><path d="M38 888L29 908H38Z" fill="#3bd3d8"/>

<!-- right side -->
<rect x="1622" y="120" width="290" height="800" fill="#444"/>
<path d="M1622 120V914" stroke="#2f2f2f"/>
<path class="dot" d="M1632 129H1680M1632 131H1680M1820 129H1852M1820 131H1852"/>
<text x="1697" y="135" textLength="103" lengthAdjust="spacingAndGlyphs" style="fill:#9a9a9a">Channel Box / Layer Editor</text>
<rect x="1870" y="124" width="12" height="11" fill="#333" stroke="#666"/><path d="M1874 127h5v5h-2M1873 130h3v3h-3z" stroke="#ccc" fill="none"/>
<rect x="1885" y="123" width="13" height="12" rx="2" fill="#5a5a5a"/><path d="M1888 126l6 6M1894 126l-6 6" stroke="#ddd" stroke-width="2"/>
<text transform="translate(1901 133) rotate(90)" textLength="79" lengthAdjust="spacingAndGlyphs" style="fill:#9a9a9a">Attribute Editor</text>
<rect x="1899" y="225" width="13" height="155" fill="#666"/>
<text transform="translate(1901 237) rotate(90)" textLength="132" lengthAdjust="spacingAndGlyphs" style="fill:#d0d0d0">Channel Box / Layer Editor</text>
<rect x="1884" y="164" width="13" height="520" fill="#333"/>
<!-- layer editor -->
<rect x="1630" y="696" width="62" height="20" fill="#5a5a5a"/><rect x="1692" y="696" width="60" height="20" fill="#3c3c3c"/><rect x="1752" y="696" width="49" height="20" fill="#3c3c3c"/>
<text x="1642" y="711" textLength="36" lengthAdjust="spacingAndGlyphs">Display</text><text x="1703" y="711" textLength="37" lengthAdjust="spacingAndGlyphs" class="r">Render</text><text x="1764" y="711" textLength="26" lengthAdjust="spacingAndGlyphs" class="r">Anim</text>
<rect x="1631.500" y="716.500" width="265" height="194" fill="#444" stroke="#2d2d2d"/>
<text x="1642" y="732" textLength="30" lengthAdjust="spacingAndGlyphs">Layers</text>
<text x="1688" y="732" textLength="41" lengthAdjust="spacingAndGlyphs">Options</text>
<text x="1744" y="732" textLength="23" lengthAdjust="spacingAndGlyphs">Help</text>
<path d="M1800 750l6 -4 3 2 -3 6z" class="i"/><path d="M1810 744l3 4h-2v5h-2v-5h-2z" fill="#55b5c4"/>
<path d="M1822 750l6 -4 3 2 -3 6z" class="i"/><path d="M1834 753l-3 -4h2v-5h2v5h2z" fill="#55b5c4"/>
<path d="M1850 750l6 -4 4 2 -4 6z" class="i"/><path d="M1860 743v6M1857 746h6" stroke="#55b5c4" stroke-width="2"/>
<path d="M1873 750l6 -4 4 2 -4 6z" class="i"/><circle cx="1883" cy="746" r="3.500" fill="#55b5c4"/>
<rect x="1634" y="764" width="258" height="132" fill="#2b2b2b"/>
<rect x="1638.500" y="768.500" width="19" height="13" rx="2" fill="#2b2b2b" stroke="#1d1d1d"/><text x="1644" y="779" textLength="8" lengthAdjust="spacingAndGlyphs">V</text>
<rect x="1661.500" y="768.500" width="19" height="13" rx="2" fill="#2b2b2b" stroke="#1d1d1d"/><text x="1668" y="779" textLength="7" lengthAdjust="spacingAndGlyphs">P</text>
<rect x="1684.500" y="768.500" width="19" height="13" rx="2" fill="#303030" stroke="#1d1d1d"/>
<rect x="1707" y="768" width="16" height="14" fill="#a0002a"/>
<text x="1727" y="779.500" textLength="150" lengthAdjust="spacingAndGlyphs" style="fill:#dcdcdc">Vape_Pen_Medium_Size_Tank</text>
<rect x="1634" y="896" width="258" height="12" fill="#3c3c3c"/>
<path d="M1643 897v10l-5 -5zM1883 897v10l5 -5z" fill="#b0b0b0"/>
<rect x="1647" y="897" width="169" height="10" rx="4" fill="#5e5e5e"/>

<!-- outliner window -->
<rect x="1623" y="164" width="261" height="539" fill="#444" stroke="#9a9a9a" stroke-width="1.500"/>
<rect x="1622" y="134" width="262" height="30" fill="#fff"/>
<path d="M1630 143L1638 134.500 1646 143 1646 155H1630Z" fill="#22a7b0" transform="translate(0 2)"/><rect x="1630" y="155" width="16" height="3" fill="#9ac"/>
<text x="1652" y="154" style="font-size:13px;fill:#666" textLength="42" lengthAdjust="spacingAndGlyphs">Outliner</text>
<path d="M1765 148.500h10" stroke="#777"/><rect x="1810.500" y="144.500" width="9" height="9" fill="none" stroke="#777"/><path d="M1856 144l10 10M1866 144l-10 10" stroke="#777"/>
<text x="1632" y="179" textLength="37" lengthAdjust="spacingAndGlyphs">Display</text>
<text x="1684" y="179" textLength="29" lengthAdjust="spacingAndGlyphs">Show</text>
<text x="1728" y="179" textLength="23" lengthAdjust="spacingAndGlyphs">Help</text>
<rect x="1651" y="187" width="230" height="18" rx="2" fill="#2b2b2b"/>
<path d="M1631 192h3M1641 192h3M1631 205h3M1641 205h3M1630.500 193v3M1630.500 201v3M1644.500 193v3M1644.500 201v3" stroke="#888" stroke-width="1.500"/>
<rect x="1625" y="213" width="246" height="471" fill="#2b2b2b"/>
<rect x="1871" y="213" width="10" height="471" fill="#2f2f2f"/>
<path d="M1871 222l5 -5 5 5z" fill="#ccc"/><rect x="1871.500" y="226" width="9" height="444" rx="4" fill="#555"/><path d="M1871 674h10l-5 5z" fill="#ccc"/>
<use href="#cam" x="1677" y="223"/><use href="#cam" x="1677" y="243"/><use href="#cam" x="1677" y="263"/><use href="#cam" x="1677" y="283"/>
<text class="d" x="1688" y="227" textLength="28" lengthAdjust="spacingAndGlyphs">persp</text>
<text class="d" x="1688" y="247" textLength="18" lengthAdjust="spacingAndGlyphs">top</text>
<text class="d" x="1688" y="267" textLength="26" lengthAdjust="spacingAndGlyphs">front</text>
<text class="d" x="1688" y="287" textLength="20" lengthAdjust="spacingAndGlyphs">side</text>
<rect x="1644.500" y="297.500" width="13" height="13" fill="none" stroke="#bbb"/><path d="M1647 304h8" stroke="#ccc" stroke-width="1.500"/>
<path d="M1677 296V310M1671 299.500L1683 306.500M1671 306.500L1683 299.500" stroke="#a99bd8" stroke-width="2"/>
<text x="1688" y="307" textLength="181" lengthAdjust="spacingAndGlyphs">Vape_Pen_Medium_Size_Tank_ncl1_</text>
<path d="M1649.500 312V344H1667M1649.500 323.500H1667" fill="none" stroke="#aaa"/><circle cx="1669.500" cy="323.500" r="2" fill="#2b2b2b" stroke="#bbb"/><circle cx="1669.500" cy="343.500" r="2" fill="#2b2b2b" stroke="#bbb"/>
<use href="#mesh" x="1697" y="323"/><use href="#mesh" x="1697" y="343"/>
<text x="1708" y="327" textLength="86" lengthAdjust="spacingAndGlyphs">Cartomizer_Glass</text>
<text x="1708" y="347" textLength="85" lengthAdjust="spacingAndGlyphs">Cartomizer_Main</text>
<use href="#set" x="1677" y="363"/><use href="#set" x="1677" y="383"/>
<text x="1688" y="367" textLength="78" lengthAdjust="spacingAndGlyphs">defaultLightSet</text>
<text x="1688" y="387" textLength="86" lengthAdjust="spacingAndGlyphs">defaultObjectSet</text>
<rect x="1625" y="684" width="256" height="12" fill="#3c3c3c"/>
<path d="M1635 685v10l-5 -5zM1860 685v10l5 -5z" fill="#b0b0b0"/>
<rect x="1638" y="685" width="205" height="10" rx="4" fill="#5e5e5e"/>

<!-- timeline -->
<path class="dot" d="M8.500 918V946M11.500 918V946M8.500 955V978M11.500 955V978M8.500 987V1010M11.500 987V1010M8.500 1020V1034M11.500 1020V1034"/>
<rect x="17" y="918" width="1628" height="28" fill="#2b2b2b"/>
<rect x="26" y="918" width="12" height="28" fill="#555"/><text x="28" y="942" style="fill:#ddd" textLength="6" lengthAdjust="spacingAndGlyphs">1</text>
<path d="M80 931v15M147 931v15M214 931v15M281 931v15M348.500 931v15M415.500 931v15M483 931v15M550 931v15M617 931v15M684.500 931v15M751.500 931v15M819 931v15M886 931v15M953 931v15M1020.500 931v15M1087.500 931v15M1155 931v15M1222 931v15M1289 931v15M1356.500 931v15M1423.500 931v15M1491 931v15M1558 931v15M1625 931v15" stroke="#8a8a8a" stroke-width="1"/>
<g>
<text class="r" x="81" y="928" textLength="6" lengthAdjust="spacingAndGlyphs">5</text><text class="r" x="148" y="928" textLength="12" lengthAdjust="spacingAndGlyphs">10</text><text class="r" x="215" y="928" textLength="12" lengthAdjust="spacingAndGlyphs">15</text><text class="r" x="282" y="928" textLength="12" lengthAdjust="spacingAndGlyphs">20</text><text class="r" x="350" y="928" textLength="12" lengthAdjust="spacingAndGlyphs">25</text><text class="r" x="417" y="928" textLength="12" lengthAdjust="spacingAndGlyphs">30</text><text class="r" x="484" y="928" textLength="12" lengthAdjust="spacingAndGlyphs">35</text><text class="r" x="551" y="928" textLength="12" lengthAdjust="spacingAndGlyphs">40</text><text class="r" x="618" y="928" textLength="12" lengthAdjust="spacingAndGlyphs">45</text><text class="r" x="685" y="928" textLength="12" lengthAdjust="spacingAndGlyphs">50</text><text class="r" x="753" y="928" textLength="12" lengthAdjust="spacingAndGlyphs">55</text><text class="r" x="820" y="928" textLength="12" lengthAdjust="spacingAndGlyphs">60</text><text class="r" x="887" y="928" textLength="12" lengthAdjust="spacingAndGlyphs">65</text><text class="r" x="954" y="928" textLength="12" lengthAdjust="spacingAndGlyphs">70</text><text class="r" x="1021" y="928" textLength="12" lengthAdjust="spacingAndGlyphs">75</text><text class="r" x="1088" y="928" textLength="12" lengthAdjust="spacingAndGlyphs">80</text><text class="r" x="1156" y="928" textLength="12" lengthAdjust="spacingAndGlyphs">85</text><text class="r" x="1223" y="928" textLength="12" lengthAdjust="spacingAndGlyphs">90</text><text class="r" x="1290" y="928" textLength="12" lengthAdjust="spacingAndGlyphs">95</text><text class="r" x="1357" y="928" textLength="18" lengthAdjust="spacingAndGlyphs">100</text><text class="r" x="1424" y="928" textLength="18" lengthAdjust="spacingAndGlyphs">105</text><text class="r" x="1491" y="928" textLength="18" lengthAdjust="spacingAndGlyphs">110</text><text class="r" x="1559" y="928" textLength="18" lengthAdjust="spacingAndGlyphs">115</text><text class="r" x="1626" y="928" textLength="18" lengthAdjust="spacingAndGlyphs">120</text>
</g>
<rect x="1652" y="924" width="68" height="18" rx="2" fill="#2b2b2b"/><text x="1657" y="938" textLength="6" lengthAdjust="spacingAndGlyphs">1</text>
<path d="M1731 924v16M1745 925l-6 7 6 7zM1738 925l-5 7 5 7z" fill="#bbb" stroke="#bbb" stroke-width=".5"/>
<path d="M1754 924v16M1767 925l-9 7 9 7z" fill="#bbb" stroke="#bbb"/>
<path d="M1778 923v18" stroke="#d5813d" stroke-width="2"/><path d="M1790 925l-9 7 9 7z" fill="#bbb"/>
<path d="M1813 922l-13 10 13 10z" fill="#bbb"/>
<path d="M1823 921l15 11 -15 11z" fill="#bbb"/>
<path d="M1848 925l9 7 -9 7z" fill="#bbb"/><path d="M1858 923v18" stroke="#d5813d" stroke-width="2"/>
<path d="M1871 925l9 7 -9 7z" fill="#bbb"/><path d="M1884 924v16" stroke="#bbb"/>
<path d="M1892 925l5 7 -5 7zM1899 925l5 7 -5 7zM1907 924v16" fill="#bbb" stroke="#bbb" stroke-width=".5"/>

<!-- range row -->
<rect x="18" y="955" width="68" height="23" rx="2" fill="#2b2b2b"/><text x="24" y="971" textLength="6" lengthAdjust="spacingAndGlyphs">1</text>
<rect x="94" y="955" width="68" height="23" rx="2" fill="#2b2b2b"/><text x="100" y="971" textLength="6" lengthAdjust="spacingAndGlyphs">1</text>
<rect x="170" y="955" width="1279" height="23" fill="#3a3a3a"/>
<rect x="176" y="957" width="769" height="19" rx="2" fill="#5f5f5f"/>
<rect x="181" y="960" width="12" height="13" rx="2" fill="#9c9c9c"/><rect x="929" y="960" width="14" height="13" rx="2" fill="#9c9c9c"/>
<text x="197" y="971" textLength="6" lengthAdjust="spacingAndGlyphs">1</text><text x="907" y="971" textLength="18" lengthAdjust="spacingAndGlyphs">120</text>
<rect x="1456" y="955" width="67" height="23" rx="2" fill="#2b2b2b"/><text x="1461" y="971" textLength="18" lengthAdjust="spacingAndGlyphs">120</text>
<rect x="1532" y="955" width="67" height="23" rx="2" fill="#2b2b2b"/><text x="1537" y="971" textLength="18" lengthAdjust="spacingAndGlyphs">200</text>
<path d="M1605.500 962.500h9l-4.500 6z" fill="none" stroke="#aaa"/>
<rect x="1622.500" y="954.500" width="101" height="24" rx="2" fill="#414141" stroke="#505050"/><text x="1628" y="971" textLength="73" lengthAdjust="spacingAndGlyphs">No Anim Layer</text>
<path d="M1734.500 962.500h9l-4.500 6z" fill="none" stroke="#aaa"/>
<rect x="1751.500" y="954.500" width="101" height="24" rx="2" fill="#414141" stroke="#505050"/><text x="1757" y="971" textLength="86" lengthAdjust="spacingAndGlyphs">No Character Set</text>
<circle cx="1869" cy="966" r="7" fill="none" stroke="#bbb" stroke-width="1.300" stroke-dasharray="8 2"/><path d="M1869 961v8M1865 966h8" stroke="#d5813d" stroke-width="1.300"/>
<circle cx="1897" cy="960" r="3" fill="none" stroke="#bbb" stroke-width="1.300"/><path d="M1903 960l-2 7 4 3 -1 5M1901 967l-4 7M1898 965l4 -1 4 3" fill="none" stroke="#d5813d" stroke-width="2"/>

<!-- command row -->
<text x="28" y="1004" textLength="21" lengthAdjust="spacingAndGlyphs">MEL</text>
<rect x="63" y="988" width="618" height="23" rx="2" fill="#2b2b2b"/>
<rect x="687" y="987" width="1200" height="25" fill="#2b2b2b"/>
<text x="693" y="1004" textLength="625" lengthAdjust="spacingAndGlyphs">// Result: C:/Users/MOLEX/Desktop/Vape_Pen_Medium_Size_Tank_max_vray/Vape_Pen_Medium_Size_Tank_mb_standart.mb</text>
<rect x="1893" y="990" width="18" height="18" fill="#bbb"/><path d="M1893 992h18" stroke="#444"/><text x="1896" y="1004" style="fill:#222;font-size:10px">{;}</text>
<path d="M0 1016.500H1912" stroke="#2d2d2d"/>
</svg>
</div>
</body></html>
